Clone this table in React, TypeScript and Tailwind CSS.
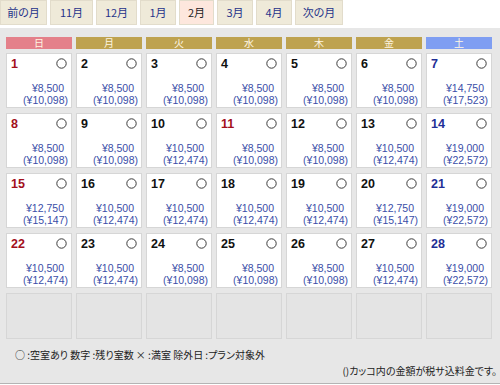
import React from "react";

type Day = { d: number; price: string; tax: string; kind?: "sun" | "sat" | "hol" };

const tabs = [
  { label: "前の月", w: "w-[47px]" },
  { label: "11月", w: "w-[43px]" },
  { label: "12月", w: "w-[41px]" },
  { label: "1月", w: "w-[36px]" },
  { label: "2月", w: "w-[35px]", current: true },
  { label: "3月", w: "w-[36px]" },
  { label: "4月", w: "w-[36px]" },
  { label: "次の月", w: "w-[48px]" },
];

const heads = [
  { label: "日", bg: "bg-[#e4808a]" },
  { label: "月", bg: "bg-[#bea24f]" },
  { label: "火", bg: "bg-[#bea24f]" },
  { label: "水", bg: "bg-[#bea24f]" },
  { label: "木", bg: "bg-[#bea24f]" },
  { label: "金", bg: "bg-[#bea24f]" },
  { label: "土", bg: "bg-[#7f9ef2]" },
];

const A = ["¥8,500", "(¥10,098)"];
const B = ["¥10,500", "(¥12,474)"];
const C = ["¥12,750", "(¥15,147)"];
const S1 = ["¥14,750", "(¥17,523)"];
const S = ["¥19,000", "(¥22,572)"];

const prices = [
  A, A, A, A, A, A, S1,
  A, A, B, A, A, B, S,
  C, B, B, B, B, C, S,
  B, B, A, A, A, B, S,
];

const days: Day[] = prices.map((p, i) => {
  const d = i + 1;
  const col = i % 7;
  const kind = col === 0 ? "sun" : col === 6 ? "sat" : d === 11 ? "hol" : undefined;
  return { d, price: p[0], tax: p[1], kind };
});

const jp = "[font-family:'Noto_Sans_CJK_JP',sans-serif] [font-feature-settings:'palt']";

function Circle() {
  return (
    <svg width="11" height="11" viewBox="0 0 11 11" className="shrink-0">
      <circle cx="5.5" cy="5.5" r="4.7" fill="none" stroke="#3a3a3a" strokeWidth="1" />
    </svg>
  );
}

function DayCell({ day }: { day: Day }) {
  const color =
    day.kind === "sat" ? "text-[#1f2f96]" : day.kind ? "text-[#a3101c]" : "text-[#111]";
  return (
    <div className="flex h-[55px] flex-col justify-between border border-[#d6d6d6] bg-white">
      <div className="flex items-start justify-between pl-[4px] pr-[4px] pt-[3px]">
        <span className={`text-[12.5px] font-bold leading-[14px] ${color}`}>{day.d}</span>
        <div className="pt-[1px]">
          <Circle />
        </div>
      </div>
      <div className="pb-[1px] pr-[3px] text-right text-[10.5px] leading-[12px] text-[#3a4ea8]">
        <div className="pr-[4px]">{day.price}</div>
        <div>{day.tax}</div>
      </div>
    </div>
  );
}

export default function App() {
  return (
    <div className="h-[385px] w-[500px] overflow-hidden bg-white [font-family:'Liberation_Sans',sans-serif]">
      <div className="flex h-[25px] gap-[3px]">
        {tabs.map((t) => (
          <div
            key={t.label}
            className={`${t.w} flex items-center justify-center border border-[#e2dccb] text-[11px] ${jp} ${
              t.current ? "bg-[#fde7dd] text-[#222]" : "bg-[#efead9] text-[#26338a]"
            }`}
          >
            {t.label}
          </div>
        ))}
      </div>

      <div className="mt-[3px] h-[356px] border-b border-[#b4b4b4] bg-[#e7e7e7]">
        <div className="px-[6px] pt-[9px]">
          <div className="grid w-[486px] grid-cols-7 gap-x-[4px]">
            {heads.map((h) => (
              <div
                key={h.label}
                className={`${h.bg} flex h-[12px] items-center justify-center text-[10px] leading-none text-[#fff6e2] ${jp}`}
              >
                {h.label}
              </div>
            ))}
          </div>
          <div className="mt-[4px] grid w-[486px] grid-cols-7 gap-x-[4px] gap-y-[5px]">
            {days.map((d) => (
              <DayCell key={d.d} day={d} />
            ))}
            {Array.from({ length: 7 }, (_, i) => (
              <div key={`e${i}`} className="h-[46px] border border-[#d6d6d6] bg-[#e4e4e4]" />
            ))}
          </div>
        </div>

        <div className={`mt-[8px] pl-[15px] pr-[3px] text-[10px] leading-[16px] text-[#222] ${jp}`}>
          <div>○ :空室あり 数字 :残り室数 × :満室 除外日 :プラン対象外</div>
          <div className="text-right">()カッコ内の金額が税サ込料金です。</div>
        </div>
      </div>
    </div>
  );
}
